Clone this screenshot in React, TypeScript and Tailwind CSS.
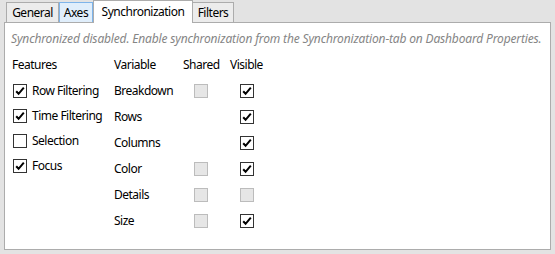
import React from "react";

const Check = () => (
  <svg width="14" height="14" viewBox="0 0 14 14" className="block">
    <path d="M3.2 7.2 L5.6 9.8 L10.8 3.6" fill="none" stroke="#000" strokeWidth="2" />
  </svg>
);

function Box({ checked, disabled }: { checked?: boolean; disabled?: boolean }) {
  if (disabled) {
    return <div className="w-[14px] h-[14px] border border-[#bcbcbc] bg-[#e6e6e6]" />;
  }
  return (
    <div className="w-[14px] h-[14px] border border-[#333333] bg-white relative">
      {checked && (
        <div className="absolute -left-px -top-px">
          <Check />
        </div>
      )}
    </div>
  );
}

const features: [string, boolean][] = [
  ["Row Filtering", true],
  ["Time Filtering", true],
  ["Selection", false],
  ["Focus", true],
];

type Cell = "none" | "dis" | "on";
const vars: [string, Cell, Cell][] = [
  ["Breakdown", "dis", "on"],
  ["Rows", "none", "on"],
  ["Columns", "none", "on"],
  ["Color", "dis", "on"],
  ["Details", "dis", "dis"],
  ["Size", "dis", "on"],
];

function CellBox({ c }: { c: Cell }) {
  if (c === "none") return null;
  if (c === "dis") return <Box disabled />;
  return <Box checked />;
}

export default function App() {
  return (
    <div
      className="w-[555px] h-[254px] bg-[#e3e3e3] text-[12px] tracking-[-0.5px] text-black flex flex-col"
      style={{ fontFamily: '"Noto Sans", "Open Sans", sans-serif' }}
    >
      <div className="flex items-end h-[22px] pl-[6px]">
        <div className="w-[53px] h-[20px] border border-b-0 border-[#acacac] bg-[#ececec] flex items-center justify-center leading-none">
          General
        </div>
        <div className="w-[34px] h-[20px] border border-b-0 border-[#7eb4ea] bg-[#e0eefb] flex items-center justify-center leading-none">
          Axes
        </div>
        <div className="relative z-10 -mb-px w-[100px] h-[23px] border border-b-0 border-[#acacac] bg-white flex items-center justify-center leading-none pb-[1px]">
          Synchronization
        </div>
        <div className="w-[41px] h-[20px] border border-b-0 border-l-0 border-[#acacac] bg-[#ececec] flex items-center justify-center leading-none">
          Filters
        </div>
      </div>
      <div className="mx-[4px] h-[228px] border border-[#acacac] bg-white flex flex-col">
        <div className="h-[16px] mt-[8px] pl-[6px] italic tracking-[-0.16px] text-[#858585] leading-[16px] whitespace-nowrap">
          Synchronized disabled. Enable synchronization from the Synchronization-tab on Dashboard Properties.
        </div>
        <div className="flex mt-[5px] pl-[7px]">
          <div className="w-[102px] flex flex-col">
            <div className="h-[26px] flex items-center">Features</div>
            {features.map(([label, on]) => (
              <div key={label} className="h-[25px] flex items-center gap-[5px] pl-[1px]">
                <Box checked={on} />
                <span>{label}</span>
              </div>
            ))}
          </div>
          <div className="grid grid-cols-[69px_47px_40px] auto-rows-[26px]">
            <div className="flex items-center">Variable</div>
            <div className="flex items-center">Shared</div>
            <div className="flex items-center">Visible</div>
            {vars.map(([name, s, v]) => (
              <React.Fragment key={name}>
                <div className="flex items-center">{name}</div>
                <div className="flex items-center pl-[11px]">
                  <CellBox c={s} />
                </div>
                <div className="flex items-center pl-[10px]">
                  <CellBox c={v} />
                </div>
              </React.Fragment>
            ))}
          </div>
        </div>
      </div>
    </div>
  );
}
